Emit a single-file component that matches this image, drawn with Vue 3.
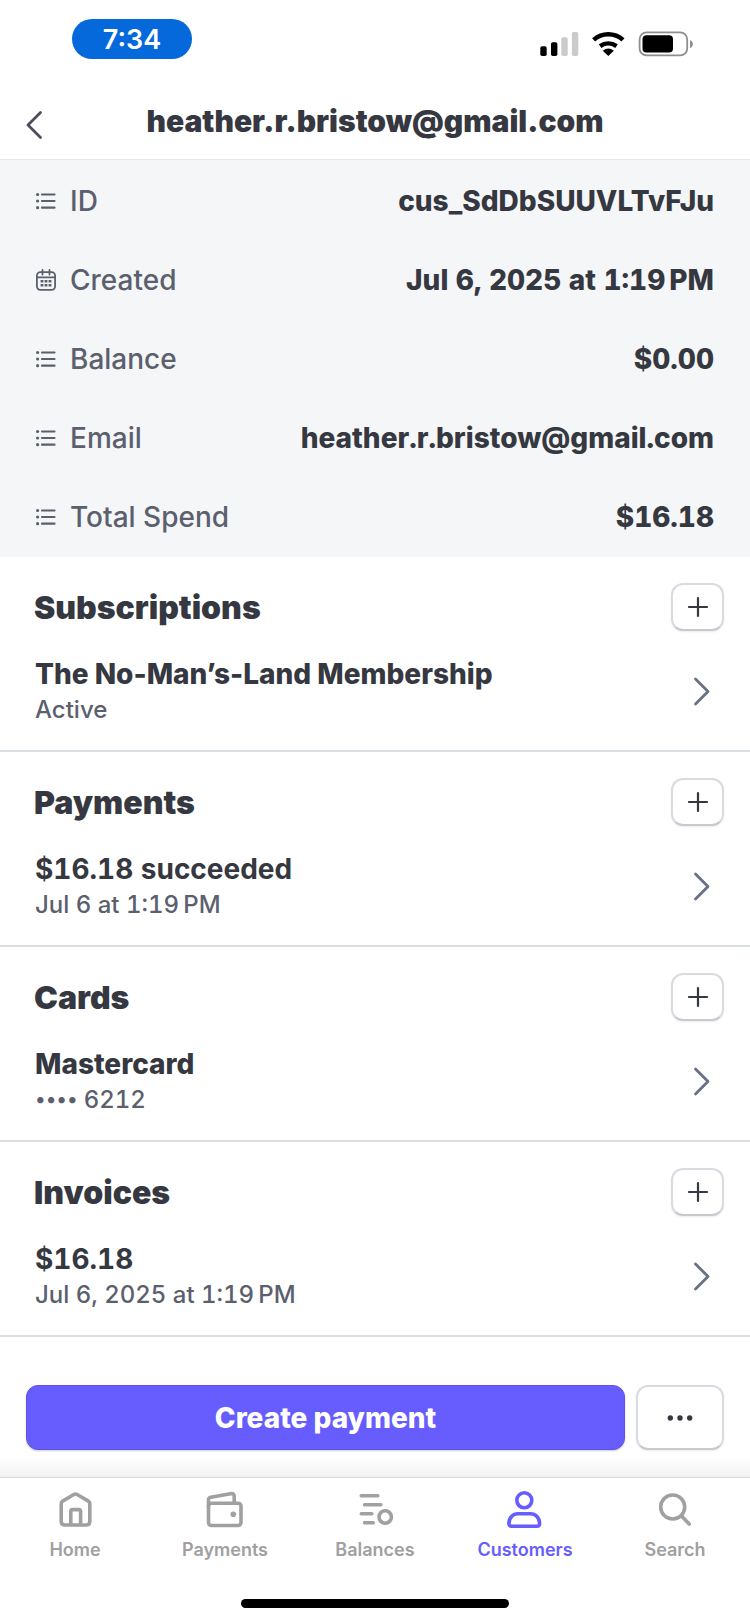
<script setup>
const details = [
  { label: 'ID', value: 'cus_SdDbSUUVLTvFJu', icon: 'list' },
  { label: 'Created', value: 'Jul 6, 2025 at 1:19\u202fPM', icon: 'calendar' },
  { label: 'Balance', value: '$0.00', icon: 'list' },
  { label: 'Email', value: 'heather.r.bristow@gmail.com', icon: 'list' },
  { label: 'Total Spend', value: '$16.18', icon: 'list' },
]

const sections = [
  { heading: 'Subscriptions', title: 'The No-Man’s-Land Membership', sub: 'Active' },
  { heading: 'Payments', title: '$16.18 succeeded', sub: 'Jul 6 at 1:19\u202fPM', amount: true },
  { heading: 'Cards', title: 'Mastercard', mask: '••••', sub: '6212' },
  { heading: 'Invoices', title: '$16.18', sub: 'Jul 6, 2025 at 1:19\u202fPM', amount: true },
]

const tabs = [
  { label: 'Home', icon: 'home' },
  { label: 'Payments', icon: 'wallet' },
  { label: 'Balances', icon: 'balances' },
  { label: 'Customers', icon: 'person', active: true },
  { label: 'Search', icon: 'search' },
]
</script>

<template>
  <div class="screen">
    <div class="status">
      <span class="clock">7:34</span>
      <svg class="signals" width="154" height="28" viewBox="0 0 154 28" aria-hidden="true">
        <g>
          <rect x="0.3" y="16.3" width="6.4" height="9.700" rx="1.8" />
          <rect x="11" y="12.300" width="6.4" height="13.700" rx="1.8" />
          <rect x="21.3" y="7.300" width="6.4" height="18.700" rx="1.8" fill="#cbcbcb" />
          <rect x="31.900" y="2" width="6.4" height="24" rx="1.8" fill="#cbcbcb" />
        </g>
        <g fill="none" stroke="#000" stroke-width="4.6">
          <path d="M53.600 9.900a22 22 0 0 1 29.400 0" />
          <path d="M60.100 16.100a14.200 14.200 0 0 1 16.400 0" stroke-width="4.400" />
        </g>
        <path d="M68.300 26l-5.500-5.300q5.500-4.600 11 0z" />
        <rect x="99.600" y="2.400" width="47.600" height="23" rx="7" fill="none" stroke="#8e8e8e" stroke-width="1.800" />
        <rect x="102.500" y="5.300" width="30.500" height="17.200" rx="4" />
        <path d="M150 10.300c3.800 1 3.800 6.700 0 7.700z" fill="#8e8e8e" />
      </svg>
    </div>

    <header class="header">
      <button class="back" type="button" aria-label="Back">
        <svg width="18" height="30" viewBox="0 0 18 30"><path d="M15.500 2.500L3 15l12.500 12.500" /></svg>
      </button>
      <h1>heather.r.bristow@gmail.com</h1>
    </header>

    <dl class="details">
      <div v-for="d in details" :key="d.label" class="detail">
        <dt>
          <svg v-if="d.icon === 'list'" width="20" height="20" viewBox="0 0 20 20" aria-hidden="true">
            <path d="M6 3.500h12.500M6 10h12.500M6 16.700h12.500" stroke="currentColor" stroke-width="2.200" stroke-linecap="round" />
            <g fill="currentColor">
              <circle cx="1.600" cy="3.500" r="1.600" />
              <circle cx="1.600" cy="10" r="1.600" />
              <circle cx="1.600" cy="16.700" r="1.600" />
            </g>
          </svg>
          <svg v-else width="20" height="22" viewBox="0 0 20 22" aria-hidden="true">
            <g fill="none" stroke="currentColor" stroke-width="1.800" stroke-linecap="round">
              <rect x=".9" y="3.200" width="18.200" height="17.600" rx="3.500" />
              <path d="M1 8.300h18M6.500 1v4.500M13.500 1v4.500" />
            </g>
            <path d="M4.600 11h2.800v2.600H4.600zM8.600 11h2.800v2.600H8.600zM12.600 11h2.800v2.600h-2.800zM4.600 15h2.800v2.600H4.600zM8.600 15h2.800v2.600H8.600zM12.600 15h2.800v2.600h-2.800z" fill="currentColor" />
          </svg>
          {{ d.label }}
        </dt>
        <dd>{{ d.value }}</dd>
      </div>
    </dl>

    <main>
      <section v-for="s in sections" :key="s.heading" class="section">
        <div class="section-head">
          <h2>{{ s.heading }}</h2>
          <button class="outline add" type="button" :aria-label="'Add to ' + s.heading">
            <svg width="22" height="22" viewBox="0 0 22 22"><path d="M11 2v18M2 11h18" /></svg>
          </button>
        </div>
        <a class="item" href="#">
          <span class="item-text">
            <strong :class="{ amount: s.amount }">{{ s.title }}</strong>
            <span class="sub"><span v-if="s.mask" class="mask">{{ s.mask }}</span>{{ s.sub }}</span>
          </span>
          <svg width="18" height="30" viewBox="0 0 18 30" aria-hidden="true"><path d="M2.500 2L15 14.500 2.500 27" /></svg>
        </a>
      </section>
    </main>

    <div class="actions">
      <button class="primary" type="button">Create payment</button>
      <button class="outline more" type="button" aria-label="More actions">
        <svg width="26" height="6" viewBox="0 0 26 6"><circle cx="3.300" cy="3" r="2.700" /><circle cx="13" cy="3" r="2.700" /><circle cx="22.700" cy="3" r="2.700" /></svg>
      </button>
    </div>

    <nav class="tabs" aria-label="Main">
      <a v-for="t in tabs" :key="t.label" class="tab" :class="{ active: t.active }" href="#" :aria-current="t.active ? 'page' : null">
        <svg width="40" height="40" viewBox="0 0 40 40" aria-hidden="true">
          <template v-if="t.icon === 'home'">
            <path d="M6.200 13.800q0-1.800 1.500-2.700L18.800 4.500q1.700-1 3.400 0l11.100 6.600q1.500.9 1.500 2.700V31.500q0 3.500-3.500 3.500H9.700q-3.500 0-3.500-3.500z" />
            <path d="M15.800 34.500V21.500q0-1.900 1.900-1.900h6q1.900 0 1.900 1.900v13" />
          </template>
          <template v-else-if="t.icon === 'wallet'">
            <rect x="3.500" y="13.200" width="32.500" height="22.300" rx="3" />
            <path d="M3.500 17V10q0-2.300 2.300-2.700L25.500 3.700q3.700-.6 3.700 2.600V13" />
            <circle class="dot" cx="28.300" cy="24.300" r="2.800" />
          </template>
          <template v-else-if="t.icon === 'balances'">
            <path d="M6.300 5.700H22.800M9.600 14.700H25.800M6.300 23.700H16.800M9.600 32.700H18.200" />
            <circle cx="30.200" cy="27" r="6.200" />
          </template>
          <template v-else-if="t.icon === 'person'">
            <circle cx="19.300" cy="10.300" r="7.500" />
            <path d="M3.900 33.500C3.900 27.500 8 23.800 13 23.800H25.500C30.500 23.800 34.600 27.500 34.600 33.500Q34.600 36.200 31.900 36.200H6.600Q3.900 36.200 3.900 33.500z" />
          </template>
          <template v-else>
            <circle cx="17.700" cy="17" r="12" />
            <path d="M26.500 26L34.200 34" />
          </template>
        </svg>
        <span>{{ t.label }}</span>
      </a>
    </nav>
    <div class="home-bar"><span></span></div>
  </div>
</template>

<style>
body {
  margin: 0;
  background: #fff;
}
</style>

<style scoped>
.screen {
  min-height: 100vh;
  display: flex;
  flex-direction: column;
  background: #fff;
  color: #353840;
  font-family: Inter, "Liberation Sans", sans-serif;
  font-size: 28px;
}

button {
  margin: 0;
  padding: 0;
  border: 0;
  background: none;
  font: inherit;
  color: inherit;
  cursor: pointer;
}

a {
  color: inherit;
  text-decoration: none;
}

svg {
  display: block;
  flex: none;
}

.status {
  display: flex;
  justify-content: space-between;
  align-items: flex-start;
  height: 59px;
  padding: 19px 56px 0 72px;
}

.clock {
  width: 120px;
  padding-top: 1px;
  border-radius: 20px;
  background: #0569db;
  color: #fff;
  font-size: 27px;
  font-weight: 600;
  line-height: 39px;
  text-align: center;
}

.signals {
  margin-top: 11px;
}

.header {
  display: grid;
  grid-template-columns: 48px 1fr 48px;
  align-items: center;
  height: 77px;
  padding-top: 4px;
  border-bottom: 1px solid #e6e8ea;
}

.back {
  display: flex;
  justify-content: flex-end;
  padding-right: 5px;
  padding-top: 8px;
}

.back svg path,
.item svg path {
  fill: none;
  stroke: #4b4e5a;
  stroke-width: 2.8;
  stroke-linecap: round;
  stroke-linejoin: round;
}

.item svg path {
  stroke: #6a7083;
}

h1,
h2 {
  margin: 0;
  font-weight: 900;
}

h1 {
  font-size: 30px;
  text-align: center;
}

h2 {
  font-size: 32px;
}

.details {
  margin: 0;
  padding: 1px 36px;
  background: #f4f6f8;
}

.detail {
  display: flex;
  justify-content: space-between;
  align-items: center;
  height: 79px;
}

dt {
  display: flex;
  align-items: center;
  gap: 14px;
  color: #5b5f6e;
  font-weight: 500;
}

dd {
  margin: 0;
  font-weight: 800;
}

dd,
.amount,
.sub {
  font-variant-numeric: tabular-nums;
}

.section {
  padding-top: 26px;
  border-bottom: 2px solid #d9dee3;
}

.section-head {
  display: flex;
  justify-content: space-between;
  align-items: center;
  padding: 0 26px 0 34px;
}

.outline {
  display: flex;
  align-items: center;
  justify-content: center;
  box-sizing: border-box;
  border: 2px solid #d8dce1;
  border-bottom-color: #c6cace;
  border-radius: 12px;
  background: #fff;
  box-shadow: 0 1px 2px rgba(0, 0, 0, 0.08);
}

.add {
  width: 53px;
  height: 48px;
}

.add path {
  stroke: #353840;
  stroke-width: 2.2;
  stroke-linecap: round;
}

.item {
  display: flex;
  justify-content: space-between;
  align-items: center;
  padding: 26px 39px 23px 35px;
}

.item-text {
  display: flex;
  flex-direction: column;
  line-height: 35px;
}

.item strong {
  font-weight: 800;
}

.item .amount {
  font-weight: 700;
}

.sub {
  display: flex;
  gap: 6px;
  color: #5b5f6e;
  font-size: 24px;
  font-weight: 500;
}

.mask {
  font-size: 20px;
}

.actions {
  display: flex;
  gap: 11px;
  padding: 48px 26px 27px;
  background: linear-gradient(to top, #f1f2f3 0, #fff 20px);
}

.primary {
  flex: 1;
  height: 65px;
  border: 1px solid #5f55e0;
  border-radius: 12px;
  background: #675dff;
  box-shadow: 0 1px 2px rgba(0, 0, 0, 0.2);
  color: #fff;
  font-weight: 800;
}

.more {
  width: 88px;
}

.more circle {
  fill: #353840;
}

.tabs {
  display: grid;
  grid-template-columns: repeat(5, 1fr);
  border-top: 1px solid #d5d9de;
  padding-top: 12px;
}

.tab {
  display: flex;
  flex-direction: column;
  align-items: center;
  gap: 9px;
  color: #a0a0a0;
  font-size: 18px;
  font-weight: 600;
  line-height: 22px;
}

.tab svg {
  fill: none;
  stroke: currentColor;
  stroke-width: 3.6;
  stroke-linecap: round;
  stroke-linejoin: round;
}

.tab .dot {
  fill: currentColor;
  stroke: none;
}

.tab.active {
  color: #675dff;
}

.home-bar {
  display: flex;
  justify-content: center;
  padding-top: 38px;
}

.home-bar span {
  width: 268px;
  height: 9px;
  border-radius: 5px;
  background: #000;
}
</style>
